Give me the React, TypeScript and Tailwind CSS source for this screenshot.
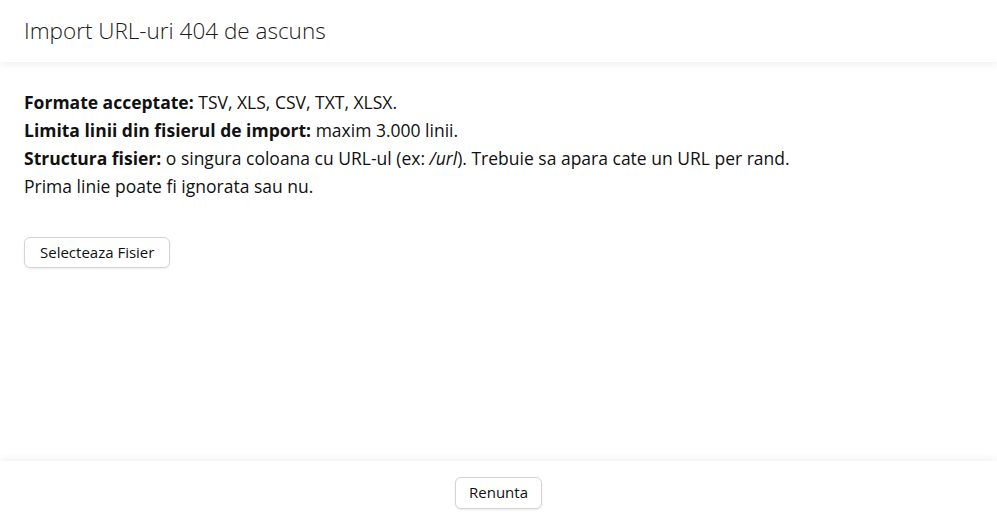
import React from 'react';

export default function App() {
  return (
    <div className="h-[524px] w-[997px] flex flex-col bg-white text-[#111] font-['Open_Sans',sans-serif] overflow-hidden">
      {/* Header */}
      <div className="h-[62px] shrink-0 flex items-center px-6 bg-white shadow-[0_2px_8px_rgba(0,0,0,0.07)] relative z-10">
        <h1 className="text-[22.5px] font-light leading-none text-[#1a1a1a]">Import URL-uri 404 de ascuns</h1>
      </div>

      {/* Body */}
      <div className="flex-1 px-6 pt-[26px]">
        <div className="text-[17.5px] leading-[28px]">
          <p><b className="font-bold">Formate acceptate:</b> TSV, XLS, CSV, TXT, XLSX.</p>
          <p><b className="font-bold">Limita linii din fisierul de import:</b> maxim 3.000 linii.</p>
          <p>
            <b className="font-bold">Structura fisier:</b> o singura coloana cu URL-ul (ex: <i>/url</i>). Trebuie sa apara cate un URL per rand.
          </p>
          <p>Prima linie poate fi ignorata sau nu.</p>
        </div>
        <button className="mt-[37px] h-[31px] px-[15px] text-[15px] border border-[#d4d4d4] rounded-[6px] bg-white shadow-[0_1px_2px_rgba(0,0,0,0.08)] text-[#111]">
          Selecteaza Fisier
        </button>
      </div>

      {/* Footer */}
      <div className="h-[63px] shrink-0 flex items-center justify-center bg-white shadow-[0_-2px_8px_rgba(0,0,0,0.06)] relative z-10">
        <button className="h-[32px] px-[13px] text-[15px] border border-[#d4d4d4] rounded-[6px] bg-white shadow-[0_1px_2px_rgba(0,0,0,0.08)] text-[#111]">
          Renunta
        </button>
      </div>
    </div>
  );
}
